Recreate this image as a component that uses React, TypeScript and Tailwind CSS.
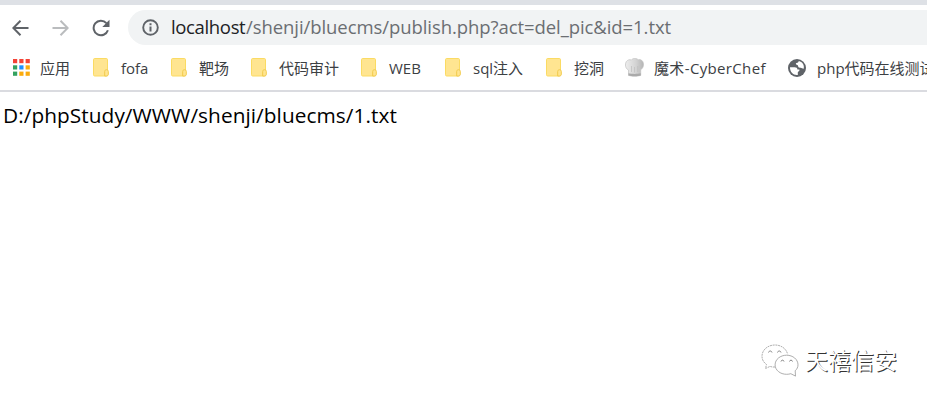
import type { ReactNode } from 'react';

function FolderIcon() {
  return (
    <svg width="17" height="19" viewBox="0 0 17 19" className="block">
      <rect x="0.5" y="0.5" width="14" height="17.5" rx="1.2" fill="#ffe591" stroke="#fbdb63" />
      <path d="M11.700 18V13.600c0-1.200.7-1.900 1.800-1.900s1.800.7 1.800 1.900v2.600c0 1.200-.7 1.800-1.800 1.800z" fill="#ffe591" stroke="#f2cb4b" />
    </svg>
  );
}

function AppsIcon() {
  const colors = ['#f44336', '#f44336', '#f44336', '#34a260', '#1e90ff', '#fbab0c', '#34a260', '#fbab0c', '#fbab0c'];
  return (
    <svg width="17" height="17" viewBox="0 0 17 17" className="block">
      {colors.map((c, i) => (
        <rect key={i} x={(i % 3) * 6.3} y={Math.floor(i / 3) * 6.3} width="4.2" height="4.2" fill={c} />
      ))}
    </svg>
  );
}

function ChefIcon() {
  return (
    <svg width="19" height="19" viewBox="0 0 19 19" className="block">
      <defs>
        <linearGradient id="hat" x1="0" x2="1">
          <stop offset="0" stopColor="#ededed" />
          <stop offset=".6" stopColor="#d2d2d2" />
          <stop offset="1" stopColor="#b5b5b5" />
        </linearGradient>
      </defs>
      <path
        d="M3.500 17.400V12C.2 10.600-.2 6.200 1.300 3.600 2.500 1.900 4.600 1.300 6.300 2 8-.1 11.500-.1 13.200 1.800c2.400-.8 4.700.8 5.200 3.400.4 2.700-.4 5.400-2.700 6.400v5.800c-3 1-9.200 1-12.200 0z"
        fill="url(#hat)"
        stroke="#c2c2c2"
        strokeWidth=".7"
      />
      <path d="M3.500 15.300c3 .8 9.200.8 12.200 0v2.200c-3 1-9.200 1-12.200 0z" fill="#aaa" />
      <path d="M6.500 8v6M9.500 9v5.500M12.800 8v6" stroke="#bdbdbd" strokeWidth=".7" />
    </svg>
  );
}

function GlobeIcon() {
  return (
    <svg width="18" height="18" viewBox="0 0 18 18" className="block">
      <circle cx="9" cy="9" r="9" fill="#5f6368" />
      <path d="M2 8.200h4.600c1.900 0 2.800.8 2.800 2.200h1.500c.7 0 .9.700.5 1.200l-1.600 1.700v2.600c-4.300.6-8-2.900-7.800-7.700z" fill="#fff" />
      <path d="M10.800 2.100c-.3 1.300-1 1.800-2.300 1.900-.9.100-.8 1.500.1 1.700 1.100.2 1.500.8 1.600 1.800.2 1.200 1.300 1.300 2.600 1.300.9 0 1.400.8 2.900.9.900-3.600-1.400-6.900-4.900-7.600z" fill="#fff" />
    </svg>
  );
}

function Bookmark({ icon, children, className, label }: { icon: ReactNode; children: ReactNode; className: string; label: string }) {
  return (
    <div className={`flex shrink-0 items-center ${className}`}>
      {icon}
      <span className={`mt-px whitespace-nowrap ${label}`}>{children}</span>
    </div>
  );
}

export default function App() {
  return (
    <div className="flex h-[401px] w-[927px] flex-col overflow-hidden bg-white font-['Open_Sans','Noto_Sans_CJK_SC',sans-serif]">
      <div className="h-[5px] shrink-0 bg-[#dee1e6]" />
      <div className="flex h-10 shrink-0 items-end">
        <div className="flex h-[35px] w-32 shrink-0 items-center pl-3">
          <svg width="17" height="16" viewBox="0 0 17 16" className="block" fill="none" stroke="#5f6368" strokeWidth="2">
            <path d="M16.500 8H1.800M8.500 .8L1.300 8l7.200 7.200" />
          </svg>
          <svg width="17" height="16" viewBox="0 0 17 16" className="ml-[23px] block" fill="none" stroke="#babcbe" strokeWidth="2">
            <path d="M.5 8h14.700M8.500 .8L15.700 8l-7.200 7.200" />
          </svg>
          <svg width="18" height="18" viewBox="0 0 18 18" className="ml-[23px] block" fill="none" stroke="#5f6368" strokeWidth="2">
            <path d="M15.900 11.200A7.300 7.300 0 1 1 14.400 4.100" />
            <path d="M17.500 .8V8h-7.200z" fill="#5f6368" stroke="none" />
          </svg>
        </div>
        <div className="flex h-[35px] flex-1 items-center rounded-l-full bg-[#f1f3f4] pl-[14px]">
          <svg width="17" height="17" viewBox="0 0 17 17" className="block shrink-0" fill="none" stroke="#5f6368">
            <circle cx="8.500" cy="8.500" r="7.300" strokeWidth="1.900" />
            <path d="M8.500 7.600v5M8.500 4.200v2" strokeWidth="2" />
          </svg>
          <div className="mb-0.5 ml-3 flex whitespace-nowrap text-[18.500px] leading-[33px] text-[#6b6e72]">
            <span className="w-[75px] tracking-[-0.35px] text-[#202124]">localhost</span>
            <span className="tracking-[-0.07px]">/shenji/bluecms/publish.php?act=del_pic&amp;id=1.txt</span>
          </div>
        </div>
      </div>
      <div className="flex h-[47px] shrink-0 items-center border-b-2 border-[#dadbe0] pl-[13px] text-[15px] text-[#3c4043]">
        <Bookmark icon={<AppsIcon />} className="w-20" label="ml-[10px]">应用</Bookmark>
        <Bookmark icon={<FolderIcon />} className="w-[78px]" label="ml-[11px]">fofa</Bookmark>
        <Bookmark icon={<FolderIcon />} className="w-20" label="ml-[11px]">靶场</Bookmark>
        <Bookmark icon={<FolderIcon />} className="w-[110px]" label="ml-[11px]">代码审计</Bookmark>
        <Bookmark icon={<FolderIcon />} className="w-[84px]" label="ml-[11px]">WEB</Bookmark>
        <Bookmark icon={<FolderIcon />} className="w-[101px]" label="ml-[11px]">sql注入</Bookmark>
        <Bookmark icon={<FolderIcon />} className="w-[79px]" label="ml-[11px]">挖洞</Bookmark>
        <Bookmark icon={<ChefIcon />} className="w-[163px]" label="ml-[10px] tracking-[0.35px]">魔术-CyberChef</Bookmark>
        <Bookmark icon={<GlobeIcon />} className="w-[160px]" label="ml-[11px]">php代码在线测试</Bookmark>
      </div>
      <main className="flex flex-1 flex-col justify-between text-black">
        <p className="ml-[3px] mt-[7px] whitespace-nowrap text-[20.800px] leading-8 tracking-[0.07px]">D:/phpStudy/WWW/shenji/bluecms/1.txt</p>
        <div className="mb-[23px] mr-[30px] flex h-9 items-center self-end">
          <svg width="38" height="34" viewBox="0 0 38 34" className="block" fill="#fff" stroke="#999" strokeWidth=".8">
            <path d="M14 24c-2 .2-3.500-.1-5-.6L4.500 25.500l1-4C2.500 19.300 1 16.500 1 13.300 1 6.800 6.800 2 14 2c6.300 0 11.500 3.900 12.600 9.200" strokeDasharray="2 .7" />
            <path d="M34.200 27.800c1.800-1.700 2.800-3.700 2.800-6 0-5.400-5.100-9.600-11.400-9.600s-11.500 4.200-11.500 9.600 5.100 9.500 11.500 9.500c1.500 0 3-.2 4.200-.6l4.700 2.400z" />
            <path d="M7.500 9.500c.5-2 3-2 3.500 0M16.500 9.500c.5-2 3-2 3.500 0M20 18.500c.4-1.800 2.600-1.800 3 0M28.500 18.500c.4-1.800 2.600-1.800 3 0" fill="none" stroke="#666" />
          </svg>
          <span className="ml-[6px] whitespace-nowrap text-[23px] leading-9 text-white [text-shadow:1px_1px_0.5px_#333]">天禧信安</span>
        </div>
      </main>
    </div>
  );
}
